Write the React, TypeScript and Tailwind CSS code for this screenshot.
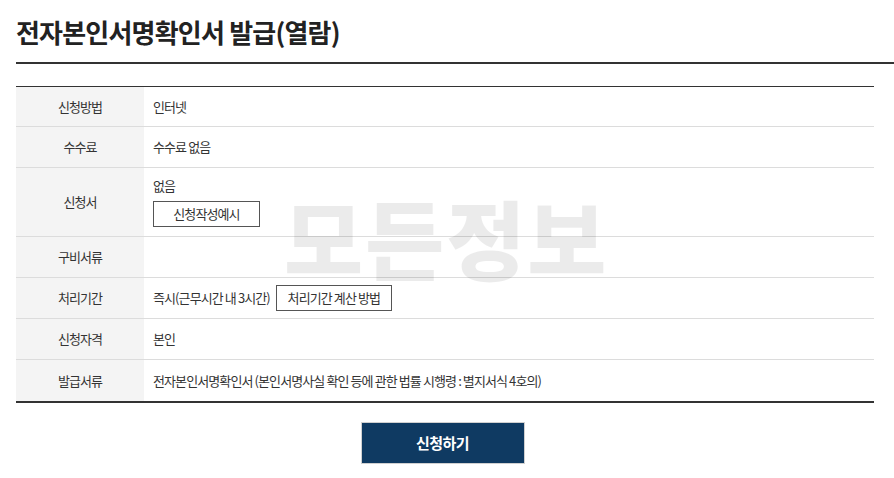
import React from "react";

const font = { fontFamily: '"Noto Sans CJK KR", "Noto Sans", sans-serif' };

function Row({ label, children, tall, first }: { label: string; children?: React.ReactNode; tall?: boolean; first?: boolean }) {
  return (
    <div className={`flex border-b border-[#dcdcdc] last:border-b-0 ${tall ? "h-[69px]" : first ? "h-[40px]" : "h-[41px]"}`}>
      <div className="w-[128px] shrink-0 bg-[#f4f4f4] flex items-center justify-center text-[13px] tracking-[-0.9px] text-[#333]">
        {label}
      </div>
      <div className="flex-1 flex items-center pl-[9px] text-[13px] tracking-[-0.9px] text-[#333]">{children}</div>
    </div>
  );
}

function OutlineButton({ children, className = "" }: { children: React.ReactNode; className?: string }) {
  return (
    <button className={`h-[26px] border border-[#555] bg-white text-[13px] tracking-[-0.9px] text-[#333] ${className}`}>
      {children}
    </button>
  );
}

export default function App() {
  return (
    <div className="relative w-[894px] h-[478px] bg-white pl-4 overflow-hidden" style={font}>
      <header className="pt-[14px] border-b-2 border-[#333] h-[64px]">
        <h1 className="text-[26px] font-bold tracking-[-0.8px] text-[#222] leading-[36px]">전자본인서명확인서 발급(열람)</h1>
      </header>

      <div className="mt-[22px] mr-[20px] border-t border-[#333] border-b-2 border-b-[#333]">
        <Row label="신청방법" first>인터넷</Row>
        <Row label="수수료">수수료 없음</Row>
        <Row label="신청서" tall>
          <div className="flex flex-col items-start gap-[8px] pt-[1px]">
            <span className="leading-[14px]">없음</span>
            <OutlineButton className="w-[107px]">신청작성예시</OutlineButton>
          </div>
        </Row>
        <Row label="구비서류" />
        <Row label="처리기간">
          <span>즉시(근무시간 내 3시간)</span>
          <OutlineButton className="w-[116px] ml-[6px]">처리기간 계산 방법</OutlineButton>
        </Row>
        <Row label="신청자격">본인</Row>
        <Row label="발급서류">전자본인서명확인서 (본인서명사실 확인 등에 관한 법률 시행령 : 별지서식 4호의)</Row>
      </div>

      <div className="flex justify-center mt-[19px] mr-[20px] pr-[5px]">
        <button className="w-[164px] h-[42px] bg-[#0f3a62] border border-[#d0d0d0] text-white text-[15px] font-bold tracking-[-0.5px]">
          신청하기
        </button>
      </div>

      {/* watermark */}
      <div className="absolute left-[284px] top-[200px] h-[74px] text-[86px] font-black leading-[74px] tracking-[2px] text-black/[0.08] pointer-events-none select-none">
        모든정보
      </div>
    </div>
  );
}
